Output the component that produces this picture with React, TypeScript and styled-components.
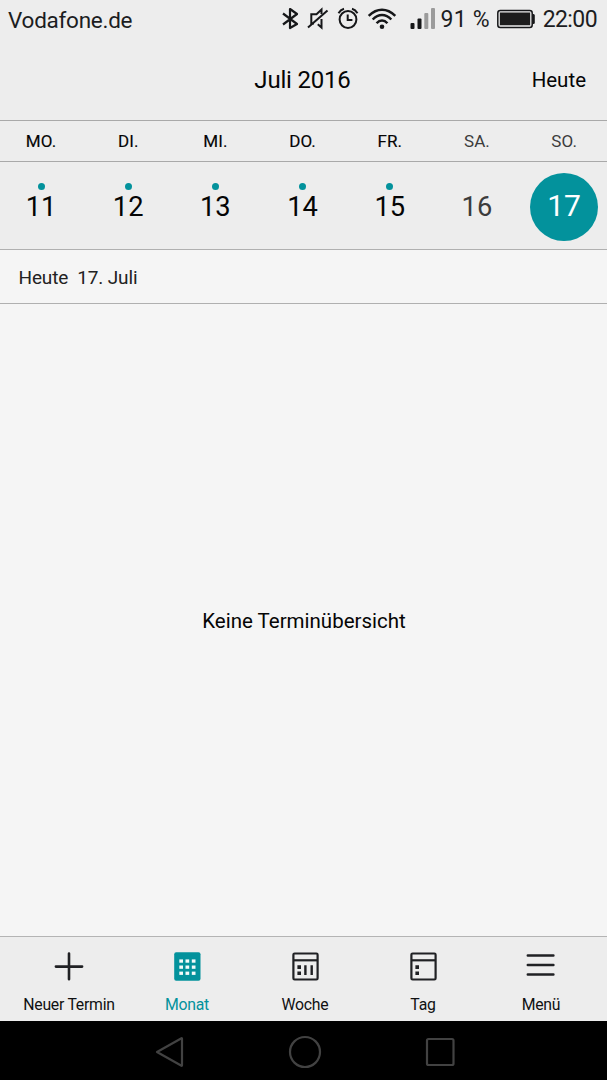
import React from "react";
import styled, { createGlobalStyle } from "styled-components";

const TEAL = "#03929c";

const GlobalStyle = createGlobalStyle`
  * { box-sizing: border-box; }
  body { margin: 0; background: #ededed; }
`;

const Screen = styled.div`
  display: flex;
  flex-direction: column;
  width: 607px;
  height: 1080px;
  overflow: hidden;
  background: #ededed;
  color: #050505;
  font-family: Roboto, "Noto Sans", sans-serif;
`;

const StatusBar = styled.header`
  display: flex;
  align-items: center;
  justify-content: space-between;
  height: 40px;
  padding: 0 10px 0 8px;
  color: #1c1d1f;
  font-size: 23px;
  line-height: 40px;
`;

const Carrier = styled.span`
  font-size: 22.5px;
  letter-spacing: -0.26px;
`;

const StatusIcons = styled.div`
  display: flex;
  align-items: center;
  height: 40px;
`;

const Reading = styled.span<{ $gap: number; $tracking: number }>`
  margin-right: ${(p) => p.$gap}px;
  letter-spacing: ${(p) => p.$tracking}px;
  line-height: 40px;
  white-space: nowrap;
`;

const TitleBar = styled.div`
  display: grid;
  grid-template-columns: 1fr auto 1fr;
  align-items: center;
  height: 80px;
  padding-right: 21px;
  padding-left: 19px;
`;

const Title = styled.h1`
  grid-column: 2;
  margin: 0;
  font-size: 24px;
  font-weight: 400;
  letter-spacing: -0.2px;
  line-height: 81px;
`;

const TodayButton = styled.button`
  justify-self: end;
  padding: 0 0 2px;
  border: 0;
  background: none;
  color: #050505;
  font: inherit;
  font-size: 20.5px;
`;

const Week = styled.div<{ $height: number }>`
  display: grid;
  grid-template-columns: repeat(7, 87.2px);
  height: ${(p) => p.$height}px;
  padding-left: 0;
  margin-left: -2.6px;
  border-top: 1px solid #a9a9a9;
`;

const WeekdayLabel = styled.span<{ $weekend: boolean }>`
  color: ${(p) => (p.$weekend ? "#3c3c3c" : "#050505")};
  font-size: 17px;
  letter-spacing: 0.1px;
  -webkit-text-stroke: ${(p) => (p.$weekend ? 0 : 0.15)}px currentColor;
  line-height: 41px;
  text-align: center;
`;

const DayCell = styled.div`
  display: flex;
  flex-direction: column;
  align-items: center;
  padding-top: 21px;
`;

const EventDot = styled.i<{ $visible: boolean }>`
  width: 7px;
  height: 7px;
  border-radius: 50%;
  background: ${(p) => (p.$visible ? TEAL : "transparent")};
`;

const DayNumber = styled.span<{ $weekend: boolean }>`
  color: ${(p) => (p.$weekend ? "#3c3c3c" : "#050505")};
  font-size: 27.3px;
  line-height: 35px;
`;

const SelectedDay = styled.div`
  width: 68px;
  height: 68px;
  margin: 11px auto 0;
  border-radius: 50%;
  background: ${TEAL};
  color: #fff;
  font-size: 30px;
  line-height: 65px;
  text-align: center;
`;

const AgendaHeader = styled.div`
  height: 54px;
  padding-left: 18.5px;
  border-top: 1px solid #b0b0b0;
  background: #f5f5f5;
  color: #222;
  font-size: 19px;
  letter-spacing: -0.15px;
  line-height: 56px;
  white-space: pre;
`;

const Agenda = styled.main`
  display: flex;
  flex: 1;
  align-items: center;
  justify-content: center;
  padding: 2px 0 0 1px;
  border-top: 1px solid #b0b0b0;
  background: #f5f5f5;
  font-size: 20.5px;
`;

const TabBar = styled.nav`
  display: grid;
  grid-template-columns: repeat(5, 118px);
  height: 85px;
  padding-left: 10px;
  border-top: 1px solid #b4b4b4;
`;

const Tab = styled.div<{ $active: boolean }>`
  display: flex;
  flex-direction: column;
  align-items: center;
  padding-top: 12px;
  color: ${(p) => (p.$active ? TEAL : "#101112")};
  font-size: 15.8px;
  letter-spacing: -0.25px;
  line-height: 19px;

  svg { margin-bottom: 12px; }
`;

const SystemBar = styled.footer`
  display: flex;
  align-items: flex-start;
  gap: 102px;
  height: 59px;
  padding: 14px 0 0 152px;
  background: #000;
`;

const BluetoothIcon = () => (
  <svg width="18" height="40" viewBox="0 0 18 40" fill="none" stroke="#161719" strokeWidth="2.2">
    <path d="M2 13.5 16 24 9 28V9L16 14 2 24.5" strokeLinejoin="round" />
  </svg>
);

const MutedIcon = () => (
  <svg width="24" height="40" viewBox="0 0 24 40" fill="none" stroke="#161719" strokeWidth="2">
    <path d="M7 23.5H4.3V14.2H9.5L14.5 9.5V14M14.5 19V27.5L10.8 24.2" />
    <path d="M1 27.5 20.5 10.5" />
  </svg>
);

const AlarmIcon = () => (
  <svg width="22" height="40" viewBox="0 0 22 40" fill="none" stroke="#161719" strokeWidth="2">
    <circle cx="11" cy="19.5" r="8.4" />
    <path d="M10.7 14.5v5.6h4.7M1.5 13.2Q3.5 9.7 7 8.8M20.5 13.2Q18.5 9.7 15 8.8" />
  </svg>
);

const WifiIcon = () => (
  <svg width="30" height="40" viewBox="0 0 30 40" fill="none" stroke="#161719" strokeWidth="2.5">
    <path d="M1.7 15.8Q8 9.7 15 9.7T28.3 15.8M5.7 19.5Q10 15 15 15T24.3 19.5M9.6 23.3Q12 20.5 15 20.5T20.4 23.3" />
    <circle cx="15" cy="26.7" r="2.3" fill="#161719" stroke="none" />
  </svg>
);

const SignalIcon = () => (
  <svg width="26" height="40" viewBox="0 0 26 40">
    <rect x="0.5" y="23" width="4" height="6" rx="1" fill="#161719" />
    <rect x="7.5" y="18.5" width="4" height="10.5" rx="1" fill="#161719" />
    <rect x="14.3" y="13" width="4" height="16" rx="1" fill="#9b9b9b" />
    <rect x="21" y="8" width="4" height="21" rx="1" fill="#9b9b9b" />
  </svg>
);

const BatteryIcon = () => (
  <svg width="39" height="40" viewBox="0 0 39 40">
    <rect x="0.8" y="10.5" width="34.4" height="17" rx="2.5" fill="#ededed" stroke="#161719" strokeWidth="1.5" />
    <rect x="2.5" y="12.2" width="31" height="13.6" fill="#aaa" />
    <rect x="3" y="12.7" width="30" height="12.3" fill="#1c1c1c" />
    <path d="M35.5 14h1q1.3 0 1.3 1.5v7q0 1.5-1.3 1.5h-1z" fill="#161719" />
  </svg>
);

const PlusIcon = () => (
  <svg width="30" height="34" viewBox="0 0 30 34" fill="none" stroke="#202124" strokeWidth="2.6" strokeLinecap="round">
    <path d="M15 4.6V30.3M1.9 17.6H28.1" />
  </svg>
);

const MonthIcon = () => (
  <svg width="30" height="34" viewBox="0 0 30 34">
    <rect x="2.2" y="3.2" width="26.3" height="28.5" rx="2" fill={TEAL} />
    {[10.4, 16.5, 22.6].map((y) =>
      [7.3, 13.5, 19.8].map((x) => (
        <rect key={`${x}-${y}`} x={x} y={y} width="3.7" height="3.3" fill="#f2fafa" />
      ))
    )}
  </svg>
);

const CalendarFrame = () => (
  <>
    <rect x="3.4" y="4.5" width="24.2" height="26" rx="1.2" fill="none" stroke="#202124" strokeWidth="2.2" />
    <path d="M3.4 11.3H27.6" stroke="#202124" strokeWidth="2.2" />
    <path d="M7.4 16.3h3.6v3.6H7.4zM7.4 22.5h3.6v3.4H7.4z" fill="#202124" />
  </>
);

const WeekIcon = () => (
  <svg width="30" height="34" viewBox="0 0 30 34">
    <CalendarFrame />
    <path d="M15.4 16.3v9.8M21.7 16.3v9.8" stroke="#202124" strokeWidth="2.4" />
  </svg>
);

const DayIcon = () => (
  <svg width="30" height="34" viewBox="0 0 30 34">
    <CalendarFrame />
  </svg>
);

const MenuIcon = () => (
  <svg width="30" height="34" viewBox="0 0 30 34" fill="none" stroke="#202124" strokeWidth="2.5" strokeLinecap="round">
    <path d="M1.8 6.5H27.4M1.8 16H27.4M1.8 25.5H27.4" />
  </svg>
);

const SystemGlyph = ({ children }: { children: React.ReactNode }) => (
  <svg width="34" height="34" viewBox="0 0 34 34" fill="none" stroke="#424242" strokeWidth="2.2" strokeLinejoin="round">
    {children}
  </svg>
);

const days = [
  { name: "MO.", number: 11 },
  { name: "DI.", number: 12 },
  { name: "MI.", number: 13 },
  { name: "DO.", number: 14 },
  { name: "FR.", number: 15 },
  { name: "SA.", number: 16, weekend: true },
  { name: "SO.", number: 17, weekend: true, selected: true },
];

const tabs = [
  { label: "Neuer Termin", Icon: PlusIcon },
  { label: "Monat", Icon: MonthIcon, active: true },
  { label: "Woche", Icon: WeekIcon },
  { label: "Tag", Icon: DayIcon },
  { label: "Menü", Icon: MenuIcon },
];

const IconSlot = styled.span<{ $gap: number }>`
  display: flex;
  margin-right: ${(p) => p.$gap}px;
`;

export default function App() {
  return (
    <Screen>
      <GlobalStyle />
      <StatusBar>
        <Carrier>Vodafone.de</Carrier>
        <StatusIcons>
          <IconSlot $gap={8}><BluetoothIcon /></IconSlot>
          <IconSlot $gap={6}><MutedIcon /></IconSlot>
          <IconSlot $gap={8}><AlarmIcon /></IconSlot>
          <IconSlot $gap={13}><WifiIcon /></IconSlot>
          <IconSlot $gap={5}><SignalIcon /></IconSlot>
          <Reading $gap={7} $tracking={0.2}>91 %</Reading>
          <IconSlot $gap={7}><BatteryIcon /></IconSlot>
          <Reading $gap={0} $tracking={-0.6}>22:00</Reading>
        </StatusIcons>
      </StatusBar>
      <TitleBar>
        <Title>Juli 2016</Title>
        <TodayButton>Heute</TodayButton>
      </TitleBar>
      <Week $height={41}>
        {days.map((d) => (
          <WeekdayLabel key={d.name} $weekend={!!d.weekend}>{d.name}</WeekdayLabel>
        ))}
      </Week>
      <Week $height={88}>
        {days.map((d) =>
          d.selected ? (
            <SelectedDay key={d.number}>{d.number}</SelectedDay>
          ) : (
            <DayCell key={d.number}>
              <EventDot $visible={!d.weekend} />
              <DayNumber $weekend={!!d.weekend}>{d.number}</DayNumber>
            </DayCell>
          )
        )}
      </Week>
      <AgendaHeader>{"Heute  17. Juli"}</AgendaHeader>
      <Agenda>Keine Terminübersicht</Agenda>
      <TabBar>
        {tabs.map(({ label, Icon, active }) => (
          <Tab key={label} $active={!!active}>
            <Icon />
            {label}
          </Tab>
        ))}
      </TabBar>
      <SystemBar>
        <SystemGlyph><path d="M5 17 29.5 3.2Q30 3 30 4V30Q30 31 29.5 30.8Z" /></SystemGlyph>
        <SystemGlyph><circle cx="17" cy="17" r="15" /></SystemGlyph>
        <SystemGlyph><rect x="3" y="4" width="26.5" height="26" rx="1.5" /></SystemGlyph>
      </SystemBar>
    </Screen>
  );
}
